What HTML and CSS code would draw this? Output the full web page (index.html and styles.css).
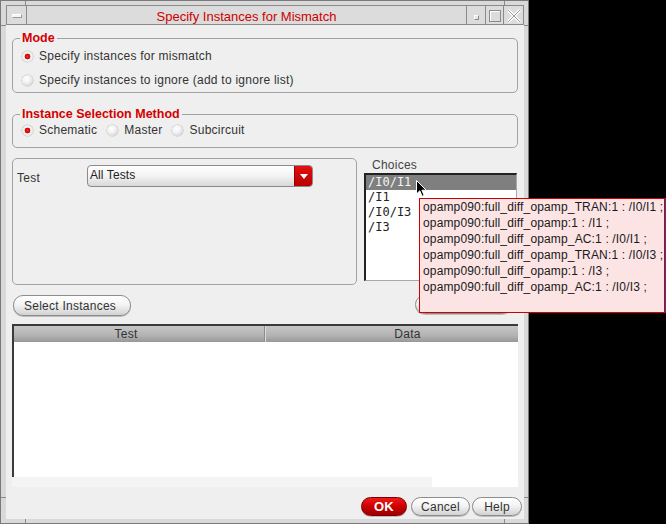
FILE: index.html
```html
<!DOCTYPE html>
<html>
<head>
<meta charset="utf-8">
<link rel="stylesheet" href="styles.css">
</head>
<body>
<div class="screen">
  <div class="window">
    <div class="titlebar">
      <div class="tb-btn tb-menu"><span class="menu-bar"></span></div>
      <div class="tb-title">Specify Instances for Mismatch</div>
      <div class="tb-btn tb-min"><span class="min-sq"></span></div>
      <div class="tb-btn tb-max"><span class="max-sq"></span></div>
      <div class="tb-btn tb-close">
        <svg width="14" height="14" viewBox="0 0 14 14"><path d="M1 1 L13 13 M13 1 L1 13" stroke="#fff" stroke-width="3"/><path d="M1 1 L13 13 M13 1 L1 13" stroke="#9a9a9a" stroke-width="1"/></svg>
      </div>
    </div>
    <div class="client">
      <div class="group mode">
        <div class="legend">Mode</div>
        <div class="radio-row"><span class="radio on"></span><span>Specify instances for mismatch</span></div>
        <div class="radio-row gap"><span class="radio"></span><span>Specify instances to ignore (add to ignore list)</span></div>
      </div>
      <div class="group ism">
        <div class="legend">Instance Selection Method</div>
        <div class="radio-row short">
          <span class="opt"><span class="radio on"></span><span>Schematic</span></span>
          <span class="opt"><span class="radio"></span><span>Master</span></span>
          <span class="opt"><span class="radio"></span><span>Subcircuit</span></span>
        </div>
      </div>
      <div class="middle">
        <div class="group testbox">
          <div class="test-row">
            <span class="test-label">Test</span>
            <div class="combo"><span class="combo-text">All Tests</span><span class="combo-arrow"><svg width="8" height="5" viewBox="0 0 8 5"><path d="M0 0 H8 L4 5 Z" fill="#fff"/></svg></span></div>
          </div>
        </div>
        <div class="choices">
          <div class="choices-label">Choices</div>
          <div class="listbox">
            <div class="item sel">/I0/I1</div>
            <div class="item">/I1</div>
            <div class="item">/I0/I3</div>
            <div class="item">/I3</div>
          </div>
        </div>
      </div>
      <div class="btn-row">
        <button class="pill sel-inst">Select Instances</button>
        <button class="pill hidden-btn"></button>
      </div>
      <div class="table">
        <div class="thead">
          <div class="th th-test">Test</div>
          <div class="th th-data">Data</div>
        </div>
        <div class="tbody"></div>
      </div>
      <div class="strip"><div class="strip-white"></div></div>
      <div class="footer">
        <button class="pill ok">OK</button>
        <button class="pill cancel">Cancel</button>
        <button class="pill help">Help</button>
      </div>
    </div>
  </div>
  <div class="tooltip">
    <div class="tip-line">opamp090:full_diff_opamp_TRAN:1 : /I0/I1 ;</div>
    <div class="tip-line">opamp090:full_diff_opamp:1 : /I1 ;</div>
    <div class="tip-line">opamp090:full_diff_opamp_AC:1 : /I0/I1 ;</div>
    <div class="tip-line">opamp090:full_diff_opamp_TRAN:1 : /I0/I3 ;</div>
    <div class="tip-line">opamp090:full_diff_opamp:1 : /I3 ;</div>
    <div class="tip-line">opamp090:full_diff_opamp_AC:1 : /I0/I3 ;</div>
  </div>
  <svg class="cursor" width="12" height="18" viewBox="0 0 12 18"><path d="M0.5 0.5 L0.5 14 L3.8 10.8 L6.2 16.3 L8.2 15.4 L5.9 10.2 L10.2 10.2 Z" fill="#000" stroke="#fff" stroke-width="1"/></svg>
</div>
</body>
</html>
```
FILE: styles.css
```css
* { box-sizing: border-box; }
html, body { margin: 0; padding: 0; background: #000; }
body { width: 666px; height: 524px; overflow: hidden; font-family: "Liberation Sans", Arial, sans-serif; font-size: 12px; color: #2a2a2a; letter-spacing: 0.25px; }
.screen { position: relative; width: 666px; height: 524px; }

.window {
  width: 529px; height: 524px;
  border: 1px solid #7a7a7a;
  padding: 4px 4px 4px 5px;
  display: flex; flex-direction: column;
  background:
    linear-gradient(#8a8a8a,#8a8a8a) 24px 0 / 1px 5px no-repeat,
    linear-gradient(#8a8a8a,#8a8a8a) 503px 0 / 1px 5px no-repeat,
    linear-gradient(#8a8a8a,#8a8a8a) 24px 518px / 1px 5px no-repeat,
    linear-gradient(#8a8a8a,#8a8a8a) 503px 518px / 1px 5px no-repeat,
    linear-gradient(#8a8a8a,#8a8a8a) 0 24px / 5px 1px no-repeat,
    linear-gradient(#8a8a8a,#8a8a8a) 0 496px / 5px 1px no-repeat,
    linear-gradient(#8a8a8a,#8a8a8a) 522px 24px / 5px 1px no-repeat,
    linear-gradient(#8a8a8a,#8a8a8a) 522px 496px / 5px 1px no-repeat,
    #d9d9d9;
}

.titlebar {
  height: 20px; flex: none;
  display: flex;
  border: 1px solid #8a8a8a;
  background: #dcdcdc;
}
.tb-btn { flex: none; display: flex; align-items: center; justify-content: center; border-right: 1px solid #8a8a8a; }
.tb-menu { width: 20px; }
.menu-bar { width: 10px; height: 4px; background: #f4f4f4; border: 1px solid #9a9a9a; border-top-color: #fff; border-left-color: #fff; margin-top: 2px; }
.tb-title { flex: 1; text-align: center; color: #cc0000; font-size: 13px; line-height: 19px; padding-top: 1px; border-right: 1px solid #8a8a8a; letter-spacing: 0; }
.tb-min { width: 19px; align-items: flex-end; padding-bottom: 4px; }
.min-sq { width: 5px; height: 5px; border: 1px solid #8a8a8a; border-top-color: #fff; border-left-color: #fff; background: #e8e8e8; }
.tb-max { width: 18px; }
.max-sq { width: 12px; height: 12px; border: 1px solid #8a8a8a; box-shadow: inset 1px 1px 0 #fff; margin-top: 2px; }
.tb-close { width: 19px; border-right: none; }
.tb-close svg { margin-top: 2px; }

.client {
  flex: 1;
  background: #efefef;
  padding: 13px 6px 0 6px;
  display: flex; flex-direction: column;
}

.group { border: 1px solid #a2a2a2; border-radius: 5px; }
.legend {
  width: max-content;
  margin: -9px 0 0 7px; padding: 0 2px;
  height: 16px; line-height: 16px;
  background: #efefef;
  color: #d40000; font-weight: bold; font-size: 12.5px; letter-spacing: 0;
}
.mode { height: 55px; }
.ism { height: 34px; margin-top: 21px; }

.radio-row { display: flex; align-items: center; height: 20px; padding-left: 9px; font-size: 12px; color: #333; }
.radio-row.gap { margin-top: 4px; }
.radio-row.short { height: 16px; }
.radio {
  width: 11px; height: 11px; border-radius: 50%; flex: none;
  margin-right: 6px;
  background: radial-gradient(circle at 40% 35%, #ffffff 0%, #f2f2f2 40%, #c4c4c4 100%);
  box-shadow: 0 0 0 0.5px #b8b8b8;
}
.radio.on { background: radial-gradient(circle at 50% 50%, #ff2a2a 0, #c80000 2.6px, #f7f7f7 3.2px, #e4e4e4 70%, #bdbdbd 100%); }
.opt { display: flex; align-items: center; margin-right: 10px; }

.middle { display: flex; margin-top: 10px; height: 127px; }
.testbox { width: 345px; height: 127px; padding: 6px 0 0 4px; }
.test-row { display: flex; height: 22px; }
.test-label { width: 70px; line-height: 22px; padding-top: 2px; color: #333; }
.combo {
  width: 226px; height: 22px;
  display: flex;
  border: 1px solid #8a8a8a; border-radius: 4px;
  background: linear-gradient(#ffffff, #f3f3f3 50%, #d8d8d8);
  overflow: hidden;
}
.combo-text { flex: 1; padding-left: 2px; line-height: 19px; color: #222; letter-spacing: 0.1px; }
.combo-arrow { width: 18px; display: flex; align-items: center; justify-content: center; background: linear-gradient(#e41010, #b80000); border-left: 1px solid #900; }

.choices { margin-left: 7px; width: 153px; display: flex; flex-direction: column; }
.choices-label { height: 15px; line-height: 15px; padding-left: 8px; color: #444; }
.listbox {
  height: 108px;
  background: #fff;
  border-style: solid; border-width: 2px 1px 1px 2px;
  border-color: #222 #a8a8a8 #a8a8a8 #222;
}
.item { height: 15px; line-height: 15px; padding-left: 2px; font-family: "DejaVu Sans Mono", "Liberation Mono", monospace; font-size: 12px; color: #222; letter-spacing: 0; }
.item.sel { background: #7f7f7f; color: #f4f4f4; }

.btn-row { display: flex; margin-top: 10px; height: 22px; }
.pill {
  font-family: "Liberation Sans", Arial, sans-serif; font-size: 12px; color: #333; letter-spacing: 0.25px;
  border: 1px solid #8c8c8c; border-radius: 10px;
  background: linear-gradient(#ffffff, #f4f4f4 45%, #d2d2d2);
  padding: 0; margin: 0;
  box-shadow: 0 1px 0 #bdbdbd;
}
.sel-inst { width: 118px; height: 21px; margin-left: 1px; text-align: left; padding-left: 10px; }
.hidden-btn { width: 97px; height: 19px; margin-left: auto; margin-right: 6px; }

.table {
  margin-top: 7px; height: 153px;
  display: flex; flex-direction: column;
  border-top: 2px solid #3a3a3a; border-left: 2px solid #3a3a3a;
  background: #fff;
}
.thead { display: flex; height: 16px; background: linear-gradient(#c6c6c6, #b2b2b2 60%, #989898); }
.th { line-height: 16px; text-align: center; color: #333; font-size: 12px; }
.th-test { width: 251px; border-right: 1px solid #8c8c8c; box-shadow: 1px 0 0 #dcdcdc; padding-right: 26px; }
.th-data { flex: 1; padding-left: 32px; }
.tbody { flex: 1; background: #fff; }

.strip { height: 10px; display: flex; justify-content: flex-end; background: #f4f4f4; }
.strip-white { width: 86px; background: #fff; }

.footer { display: flex; justify-content: flex-end; margin-top: 10px; margin-right: -4px; height: 19px; }
.footer .pill { height: 19px; }
.ok { width: 46px; background: linear-gradient(#f21a1a, #cc0000 50%, #a00000); border-color: #7a0000; color: #fff; font-weight: bold; font-size: 13px; }
.cancel { width: 59px; margin-left: 4px; }
.help { width: 50px; margin-left: 2px; }

.tooltip {
  position: absolute; left: 419px; top: 198px;
  width: 246px; height: 115px;
  border: 1px solid #d00000;
  background: #fce4e4;
  padding: 0 0 0 3px;
  box-shadow: 1px 0 0 #3040a0;
}
.tip-line { height: 16px; line-height: 16px; color: #1a1a1a; font-size: 12px; white-space: nowrap; letter-spacing: 0.15px; }

.cursor { position: absolute; left: 416px; top: 180px; }
```
